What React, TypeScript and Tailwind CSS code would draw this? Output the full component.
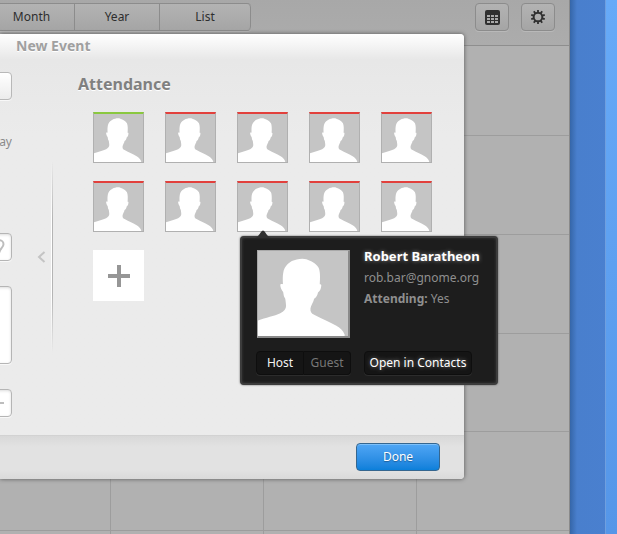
import React from "react";

const guests = [
  { id: 1, attending: true },
  { id: 2, attending: false },
  { id: 3, attending: false },
  { id: 4, attending: false },
  { id: 5, attending: false },
  { id: 6, attending: false },
  { id: 7, attending: false },
  { id: 8, attending: false },
  { id: 9, attending: false },
  { id: 10, attending: false },
];

const SELECTED = 8;

function Silhouette() {
  return (
    <svg viewBox="0 0 93 88" preserveAspectRatio="none" className="block h-full w-full" aria-hidden="true">
      <rect width="93" height="88" fill="#c5c5c5" />
      <path
        fill="#fff"
        d="M0 72C8 69 17 67.500 23 64.500C27 62.500 29 60 29 57C28.800 54 28.500 51 28 49C26.500 47.500 26.500 45 26 42.500C24.500 41 23 37.500 23 35C23.200 33.800 25 34 25.800 34.500C25.500 30 25.500 26 26 23C27 15 33 10 40 8.700C43 8 47 7.500 50 8.600C55 10.500 60 13 62.500 17C64.500 21 64.200 28 63.800 34.500C65 34 65.700 35 65.300 36.500C65 39.500 64 41.500 62 43C61.500 46 60 48.500 58 49.500C57.500 53 54.500 56.500 54.200 59.500C54 63 55 64.500 58 66C66 70 75 74 81 77.500C85 80 88 82.500 89.500 86.500L89.500 88L0 88Z"
      />
    </svg>
  );
}

function GridIcon() {
  return (
    <svg width="15" height="15" viewBox="0 0 15 15" aria-hidden="true">
      <rect width="15" height="15" rx="2" fill="#303030" />
      <g fill="#a9a9a9">
        <rect x="2" y="5" width="3" height="2" />
        <rect x="6" y="5" width="3" height="2" />
        <rect x="10" y="5" width="3" height="2" />
        <rect x="2" y="8" width="3" height="2" />
        <rect x="6" y="8" width="3" height="2" />
        <rect x="10" y="8" width="3" height="2" />
        <rect x="2" y="11" width="3" height="2" />
        <rect x="6" y="11" width="3" height="2" />
        <rect x="10" y="11" width="3" height="2" />
      </g>
    </svg>
  );
}

function GearIcon() {
  return (
    <svg width="16" height="16" viewBox="0 0 16 16" aria-hidden="true">
      <circle cx="8" cy="8" r="4.300" fill="none" stroke="#303030" strokeWidth="1.900" />
      <g stroke="#303030" strokeWidth="1.800">
        {[0, 36, 72, 108, 144, 180, 216, 252, 288, 324].map((a) => (
          <path key={a} d="M8 3.500V0.900" transform={`rotate(${a} 8 8)`} />
        ))}
      </g>
    </svg>
  );
}

function Toolbar() {
  const segment = "border-r border-[#8c8c8c] bg-linear-to-b from-[#b3b3b3] to-[#a5a5a5]";
  const tool =
    "flex h-7 w-[34px] items-center justify-center rounded border border-[#8c8c8c] bg-linear-to-b from-[#b3b3b3] to-[#a5a5a5] shadow-[0_1px_0_#b9b9b9]";
  return (
    <header className="flex h-[46px] shrink-0 items-start justify-between border-b border-[#8e8e8e] bg-linear-to-b from-[#a8a8a8] to-[#acacac] pt-[3px] pr-[14px]">
      <nav className="-ml-3 flex h-7 overflow-hidden rounded border border-r-0 border-[#8c8c8c] text-xs text-[#2e2e2e] shadow-[0_1px_0_#b9b9b9]">
        <button className={segment + " w-[86px]"}>Month</button>
        <button className={segment + " w-[85px]"}>Year</button>
        <button className={segment + " w-[91px] rounded-r"}>List</button>
      </nav>
      <div className="flex gap-3">
        <button aria-label="Calendar grid" className={tool}>
          <GridIcon />
        </button>
        <button aria-label="Settings" className={tool}>
          <GearIcon />
        </button>
      </div>
    </header>
  );
}

function CalendarGrid() {
  return (
    <div className="-ml-[42px] grid flex-1 grid-cols-[repeat(4,153px)] grid-rows-[90px_99px_99px_98px_99px_99px] overflow-hidden bg-[#b1b1b1]">
      {Array.from({ length: 24 }, (_, i) => (
        <div key={i} className="border-r border-b border-[#9d9d9d]" />
      ))}
    </div>
  );
}

function EventForm() {
  const field =
    "w-48 shrink-0 rounded border border-[#b5b5b5] bg-white shadow-[inset_0_1px_3px_#dcdcdc,0_1px_0_#f8f8f8]";
  return (
    <form className="flex w-3 shrink-0 flex-col items-end overflow-x-clip pt-3 text-xs text-[#8a8a8a]">
      <button
        type="button"
        aria-label="Calendar"
        className="h-7 w-48 shrink-0 rounded border border-[#b8b8b8] bg-linear-to-b from-white to-[#ececec] shadow-[0_1px_0_#f8f8f8]"
      />
      <span className="mt-8 leading-5">ay</span>
      <div className="relative mt-[81px] flex">
        <input aria-label="Location" className={field + " h-7"} />
        <svg className="absolute top-[6px] right-[7px]" width="11" height="16" viewBox="0 0 11 16" aria-hidden="true">
          <path d="M5.500 13.500C5.500 10 9.500 8.500 9.500 5.300A4 4 0 0 0 1.500 5.300C1.500 8.500 5.500 10 5.500 13.500Z" fill="none" stroke="#bdbdbd" strokeWidth="2" />
        </svg>
      </div>
      <textarea aria-label="Description" className={field + " mt-[25px] h-[78px] resize-none"} />
      <div className="relative mt-[25px] flex">
        <input aria-label="Reminder" className={field + " h-7"} />
        <span className="absolute top-[13px] right-2 h-[2px] w-2 bg-[#bdbdbd]" />
      </div>
    </form>
  );
}

function ContactPopover() {
  const dark = "h-6 border border-[#0e0e0e] bg-[#151515] shadow-[0_1px_0_#2c2c2c]";
  return (
    <div
      role="dialog"
      aria-label="Robert Baratheon"
      className="absolute top-[55px] left-[3px] z-10 w-[258px] rounded border-2 border-[#3c3c3c] bg-[#1d1d1d] px-[15px] pt-3 pb-2 shadow-[inset_0_0_3px_#3c3c3c,0_0_2px_#555]"
    >
      <svg className="absolute -top-2 left-[13px]" width="16" height="8" viewBox="0 0 16 8" aria-hidden="true">
        <path d="M0 8C3 7.500 5 3 7 1Q8 0 9 1C11 3 13 7.500 16 8Z" fill="#303030" />
      </svg>
      <div className="flex gap-[14px]">
        <div className="h-[88px] w-[93px] shrink-0 border border-r-2 border-b-2 border-[#a9a9a9] border-r-[#8a8a8a] border-b-[#8a8a8a]">
          <Silhouette />
        </div>
        <div className="-mt-1 flex flex-col whitespace-nowrap text-xs leading-[21px] text-[#8f8f8f]">
          <strong className="text-[13px] leading-[21px] font-bold text-white [text-shadow:0_0_4px_#888]">Robert Baratheon</strong>
          <span>rob.bar@gnome.org</span>
          <span>
            <b className="font-bold">Attending:</b> Yes
          </span>
        </div>
      </div>
      <div className="mt-[13px] flex gap-[13px] text-xs whitespace-nowrap">
        <div className="-ml-px flex">
          <button className={dark + " w-12 rounded-l text-[#f2f2f2]"}>Host</button>
          <button className={dark + " w-[47px] rounded-r border-l-0 bg-[#1a1a1a] text-[#777]"}>Guest</button>
        </div>
        <button className={dark + " w-[108px] rounded text-white [text-shadow:0_0_4px_#888]"}>Open in Contacts</button>
      </div>
    </div>
  );
}

function Attendance() {
  return (
    <section className="pt-3 pl-[25px]">
      <h2 className="text-base leading-6 font-bold text-[#808080] [text-shadow:0_1px_0_#fff]">Attendance</h2>
      <ul className="mt-4 grid grid-cols-[repeat(5,51px)] gap-x-[21px] gap-y-[18px] pl-[15px]">
        {guests.map((g) => (
          <li key={g.id} className="relative h-[51px]">
            <button
              aria-label={"Guest " + g.id}
              className={
                "block h-[51px] w-[51px] border border-t-2 border-[#b0b0b0] " +
                (g.attending ? "border-t-[#8ac83f]" : "border-t-[#e2403c]")
              }
            >
              <Silhouette />
            </button>
            {g.id === SELECTED && <ContactPopover />}
          </li>
        ))}
        <li>
          <button aria-label="Add guest" className="flex h-[51px] w-[51px] items-center justify-center bg-white">
            <svg width="22" height="22" viewBox="0 0 22 22" aria-hidden="true">
              <path d="M11 0V22M0 11H22" stroke="#969696" strokeWidth="4" />
            </svg>
          </button>
        </li>
      </ul>
    </section>
  );
}

function NewEventDialog() {
  return (
    <div
      role="dialog"
      aria-label="New Event"
      className="absolute top-[34px] right-[105px] left-0 flex flex-col rounded-r bg-[#ebebeb] shadow-[0_0_4px_#555]"
    >
      <div className="h-[26px] rounded-tr bg-linear-to-b from-white to-[#e7e7e7] pl-4">
        <h1 className="text-sm leading-6 font-bold text-[#a0a0a0] [text-shadow:0_1px_0_#fff]">New Event</h1>
      </div>
      <div className="flex h-[375px] bg-linear-to-b from-[#e7e7e7] to-[#ebebeb] to-20%">
        <EventForm />
        <div className="flex w-[41px] shrink-0 items-center justify-end pt-[18px]">
          <button aria-label="Collapse" className="mr-[5px]">
            <svg width="9" height="12" viewBox="0 0 9 12" aria-hidden="true">
              <path d="M7.500 1L2 6L7.500 11" fill="none" stroke="#c4c4c4" strokeWidth="2" />
            </svg>
          </button>
          <div className="h-48 w-px bg-[linear-gradient(transparent,#fff_30%,#fff_70%,transparent)]" />
          <div className="h-48 w-px bg-[linear-gradient(transparent,#b4b4b4_30%,#b4b4b4_70%,transparent)]" />
        </div>
        <Attendance />
      </div>
      <footer className="flex h-11 items-center justify-end rounded-br border-t border-[#d2d2d2] bg-[linear-gradient(#d8d8d8,#e2e2e2_25%,#e2e2e2_80%,#dadada)] pr-6 pb-[2px]">
        <button className="h-7 w-[84px] rounded border border-[#35668f] bg-linear-to-b from-[#4fa6f5] to-[#0a7fda] text-xs text-white shadow-[inset_0_1px_0_#7cc0fa] [text-shadow:0_1px_1px_#20609a]">
          Done
        </button>
      </footer>
    </div>
  );
}

export default function App() {
  return (
    <div className="flex h-screen overflow-hidden bg-[#497fcd] font-['Noto_Sans',sans-serif]">
      <main className="relative flex min-w-0 flex-1 flex-col overflow-hidden border-r border-[#8a8a8a] bg-[#b1b1b1]">
        <Toolbar />
        <CalendarGrid />
        <NewEventDialog />
      </main>
      <aside className="flex w-[47px] shrink-0 justify-end bg-linear-to-r from-[#3566a8] via-[#497fcd] via-15% to-[#4a80d0]">
        <div className="w-3 border-l border-[#6f9fdf] bg-linear-to-b from-[#67aaf8] to-[#5596e8]" />
      </aside>
    </div>
  );
}
